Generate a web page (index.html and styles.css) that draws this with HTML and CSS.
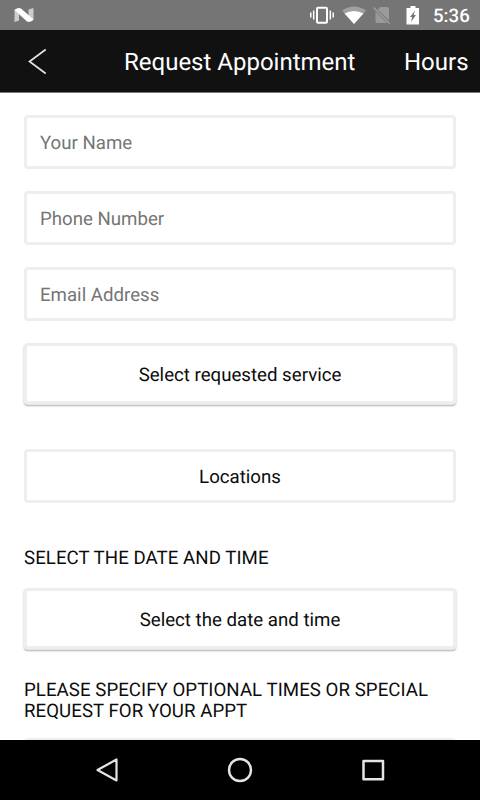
FILE: index.html
```html
<!DOCTYPE html>
<html lang="en">
<head>
<meta charset="utf-8">
<title>Request Appointment</title>
<link rel="stylesheet" href="styles.css">
</head>
<body>
<div class="status">
  <svg class="logo" width="22" height="16" viewBox="0 0 22 16"><path fill="#ccc" d="M.5 3 5 1.500v12L.5 15zM14.500 2.500 19.500 1v12l-5 1.500z"/><path fill="#fff" d="M.5 3Q4 0 7 1.500l12.500 11q-3 3.500-6.500 2z"/></svg>
  <div class="indicators">
    <svg width="24" height="18" viewBox="0 0 24 18"><path fill="none" stroke="#fff" stroke-width="1.500" d="M.8 6.500v5M3.700 4.500v9M20.300 4.500v9M23.200 6.500v5"/><rect x="7" y="1.800" width="10" height="15" rx="1" fill="none" stroke="#fff" stroke-width="2"/></svg>
    <svg class="wifi" width="24" height="18" viewBox="0 0 24 18"><path fill="#a0a0a0" d="M0 4.500Q12-3.500 24 4.500L12 18z"/><path fill="#fff" d="M2.500 7.500q9.500-5 19 0L12 18z"/></svg>
    <svg class="sim" width="18" height="18" viewBox="0 0 18 18"><path fill="#9a9a9a" d="M7 1h7q2 0 2 2v11.500L4.500 3.500zM2.500 5.500 14 17H4q-1.500 0-1.500-1.500z"/><path stroke="#a0a0a0" stroke-width="1.500" d="m.5 1.500 16 16"/></svg>
    <svg class="battery" width="14" height="19" viewBox="0 0 14 19"><path fill="#fff" d="M4.500 0h5v2h3.500v16.500H.5V2h4z"/><path fill="#757575" d="M9 4.500 7.700 9H10l-5 7 1.200-5H4z"/></svg>
    <span class="clock">5:36</span>
  </div>
</div>
<header class="bar">
  <svg class="back" width="20" height="28" viewBox="0 0 20 28"><path fill="none" stroke="#e4e4e4" stroke-width="1.700" d="M18.700 1.500 2.500 13.500l16.200 12"/></svg>
  <h1 class="title">Request Appointment</h1>
  <span class="hours">Hours</span>
</header>
<main class="form">
  <input class="field" type="text" placeholder="Your Name">
  <input class="field" type="tel" placeholder="Phone Number">
  <input class="field email" type="email" placeholder="Email Address">
  <button class="raised service">Select requested service</button>
  <button class="field locations">Locations</button>
  <p class="label when">SELECT THE DATE AND TIME</p>
  <button class="raised date">Select the date and time</button>
  <p class="label notes">PLEASE SPECIFY OPTIONAL TIMES OR SPECIAL REQUEST FOR YOUR APPT</p>
  <textarea class="field request"></textarea>
</main>
<nav class="nav">
  <svg width="26" height="26" viewBox="0 0 26 26"><path fill="none" stroke="#e4e4e4" stroke-width="2.200" stroke-linejoin="round" d="M22.500 2.500v21L3.500 13z"/></svg>
  <svg width="26" height="26" viewBox="0 0 26 26"><circle cx="13" cy="13" r="11" fill="none" stroke="#e4e4e4" stroke-width="2.400"/></svg>
  <svg width="26" height="26" viewBox="0 0 26 26"><rect x="3.500" y="4" width="19.500" height="18.200" fill="none" stroke="#e4e4e4" stroke-width="2.500" stroke-linejoin="round"/></svg>
</nav>
</body>
</html>
```
FILE: styles.css
```css
* { box-sizing: border-box; }
body {
  margin: 0;
  width: 480px;
  height: 800px;
  display: flex;
  flex-direction: column;
  overflow: hidden;
  background: #fff;
  color: #0c0c0c;
  font: 18.67px/21px Roboto, sans-serif;
  text-rendering: geometricPrecision;
}
svg { display: block; flex: none; }
.status {
  flex: none;
  height: 30px;
  display: flex;
  align-items: center;
  justify-content: space-between;
  padding: 0 11px 0 14px;
  background: #757575;
}
.indicators { display: flex; align-items: center; }
.wifi { margin-left: 8px; }
.sim { margin-left: 7px; }
.battery { margin-left: 15px; }
.clock {
  width: 36px;
  margin-left: 13px;
  padding-top: 2px;
  color: #fff;
  font-weight: 500;
  line-height: 20px;
  white-space: nowrap;
}
.bar {
  flex: none;
  height: 63px;
  display: grid;
  grid-template-columns: 97px 280px 76px;
  align-items: center;
  padding: 2px 0 0 27px;
  background: #111;
  border-bottom: 1px solid #777;
  color: #fff;
  font-size: 24px;
  line-height: 29px;
}
.title { margin: 0; font-size: 24px; font-weight: 400; }
.title, .hours { padding-top: 1px; }
.form {
  flex: 1;
  min-height: 0;
  overflow: hidden;
  display: flex;
  flex-direction: column;
  padding: 22px 24px 0;
}
.field, .raised {
  flex: none;
  width: 100%;
  height: 54px;
  margin: 0 0 22px;
  padding: 2px 13px 0;
  border: 3px solid #eee;
  border-radius: 4px;
  background: #fff;
  color: #0c0c0c;
  font: inherit;
  text-rendering: inherit;
  outline: none;
}
.field::placeholder { color: #757575; opacity: 1; }
.raised {
  height: 60px;
  padding-top: 3px;
  border-top-width: 2px;
  box-shadow: 0 0 1px 1px #eaeaea, 0 2px 2px rgba(0, 0, 0, .32);
}
.email { margin-bottom: 23px; }
.service { margin-bottom: 45px; }
.locations { margin-bottom: 45px; }
.label { margin: 0; letter-spacing: .05px; }
.when { margin-bottom: 20px; }
.date { margin-bottom: 31px; }
.notes { margin-bottom: 16px; }
.request { height: 110px; resize: none; }
.nav {
  flex: none;
  height: 60px;
  display: flex;
  justify-content: center;
  align-items: center;
  gap: 107px;
  background: #000;
}
```
